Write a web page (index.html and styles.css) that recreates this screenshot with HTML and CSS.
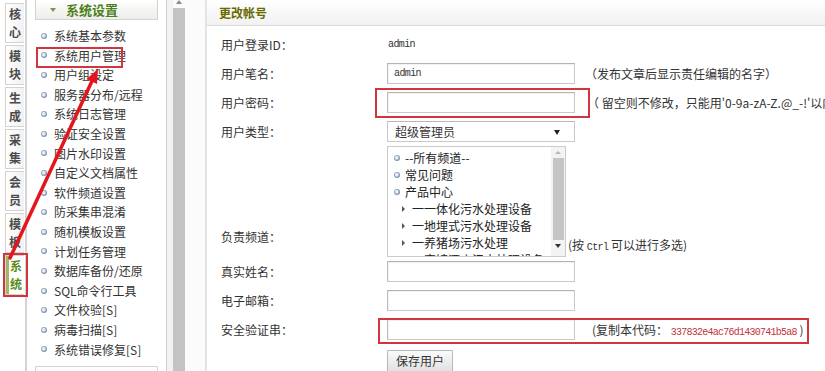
FILE: index.html
```html
<!DOCTYPE html>
<html lang="zh-CN">
<head>
<meta charset="utf-8">
<title>更改帐号</title>
<link rel="stylesheet" href="styles.css">
</head>
<body>
<div class="app">
  <nav class="tabs">
    <div class="tab"><span>核</span><span>心</span></div>
    <div class="tab"><span>模</span><span>块</span></div>
    <div class="tab"><span>生</span><span>成</span></div>
    <div class="tab"><span>采</span><span>集</span></div>
    <div class="tab"><span>会</span><span>员</span></div>
    <div class="tab"><span>模</span><span>板</span></div>
    <div class="tab active"><span>系</span><span>统</span></div>
  </nav>

  <aside class="menu">
    <div class="menu-head"><i class="caret"></i>系统设置</div>
    <ul class="menu-list">
      <li><i class="dot"></i>系统基本参数</li>
      <li><i class="dot"></i>系统用户管理</li>
      <li><i class="dot"></i>用户组设定</li>
      <li><i class="dot"></i>服务器分布/远程</li>
      <li><i class="dot"></i>系统日志管理</li>
      <li><i class="dot"></i>验证安全设置</li>
      <li><i class="dot"></i>图片水印设置</li>
      <li><i class="dot"></i>自定义文档属性</li>
      <li><i class="dot"></i>软件频道设置</li>
      <li><i class="dot"></i>防采集串混淆</li>
      <li><i class="dot"></i>随机模板设置</li>
      <li><i class="dot"></i>计划任务管理</li>
      <li><i class="dot"></i>数据库备份/还原</li>
      <li><i class="dot"></i>SQL命令行工具</li>
      <li><i class="dot"></i>文件校验[S]</li>
      <li><i class="dot"></i>病毒扫描[S]</li>
      <li><i class="dot"></i>系统错误修复[S]</li>
    </ul>
    <div class="menu-head next"></div>
  </aside>

  <div class="frame-scroll">
    <i class="up"></i>
    <div class="thumb"></div>
  </div>

  <main class="panel">
    <div class="panel-head">更改帐号</div>
    <div class="form">
      <div class="label">用户登录ID：</div>
      <div class="field"><span class="mono val">admin</span></div>

      <div class="label">用户笔名：</div>
      <div class="field"><div class="input mono">admin</div><span class="note">（发布文章后显示责任编辑的名字）</span></div>

      <div class="label">用户密码：</div>
      <div class="field"><div class="input"></div><span class="note pwd">（ 留空则不修改，只能用'0-9a-zA-Z.@_-!'以内范围的字符 ）</span></div>

      <div class="label">用户类型：</div>
      <div class="field"><div class="select">超级管理员<i class="tri"></i></div></div>

      <div class="label bottom">负责频道：</div>
      <div class="field list-field">
        <div class="listbox">
          <div class="list-items">
            <div class="opt"><i class="dot"></i>--所有频道--</div>
            <div class="opt"><i class="dot"></i>常见问题</div>
            <div class="opt"><i class="dot"></i>产品中心</div>
            <div class="opt sub"><i class="arr"></i>一一体化污水处理设备</div>
            <div class="opt sub"><i class="arr"></i>一地埋式污水处理设备</div>
            <div class="opt sub"><i class="arr"></i>一养猪场污水处理</div>
            <div class="opt sub"><i class="arr"></i>一宾馆酒店污水处理设备</div>
          </div>
          <div class="list-scroll">
            <i class="s-up"></i>
            <div class="s-thumb"></div>
            <i class="s-down"></i>
          </div>
        </div>
        <span class="ctrl">(按 <span class="mono">Ctrl</span> 可以进行多选)</span>
      </div>

      <div class="label">真实姓名：</div>
      <div class="field"><div class="input"></div></div>

      <div class="label">电子邮箱：</div>
      <div class="field"><div class="input"></div></div>

      <div class="label">安全验证串：</div>
      <div class="field"><div class="input"></div><span class="note code-note">(复制本代码： <span class="mono code">337832e4ac76d1430741b5a8</span> )</span></div>

      <div class="label"></div>
      <div class="field btn-field"><button class="btn" type="button">保存用户</button></div>
    </div>
  </main>
</div>

<div class="mark mark-menu"></div>
<div class="mark mark-tab"></div>
<div class="mark mark-pwd"></div>
<div class="mark mark-code"></div>
<svg class="arrow" width="825" height="371" viewBox="0 0 825 371">
  <line x1="10" y1="258" x2="92" y2="81" stroke="#e3161d" stroke-width="3.5" stroke-linecap="round"/>
  <polygon points="98,69 86.5,79 97,84" fill="#e3161d"/>
</svg>
</body>
</html>
```
FILE: styles.css
```css
html, body {
  margin: 0;
  padding: 0;
  width: 825px;
  height: 371px;
  overflow: hidden;
  background: #fff;
  font-family: "Noto Sans CJK SC", "Noto Sans", sans-serif;
  font-size: 12px;
  color: #333;
}

.app {
  display: flex;
  height: 371px;
}

/* left vertical tabs */
.tabs {
  width: 25px;
  border-right: 2px solid #d4d4d4;
  padding-top: 3px;
  display: flex;
  flex-direction: column;
  gap: 2px;
  flex: none;
}
.tab {
  margin-left: 5px;
  width: 19px;
  height: 40px;
  box-sizing: border-box;
  border: 1px solid #d2d2d2;
  border-right: none;
  background: linear-gradient(90deg, #ffffff, #f1f1f1);
  display: flex;
  flex-direction: column;
  align-items: center;
  justify-content: center;
  font-size: 12px;
  font-weight: bold;
  color: #4b4b4b;
}
.tab span {
  display: block;
  height: 18px;
  line-height: 18px;
}
.tab.active {
  background: #fff;
  box-shadow: inset 3px 0 0 #9dbb62;
  color: #5a8a1c;
  padding-left: 2px;
}

/* menu */
.menu {
  width: 131px;
  padding-left: 8px;
  border-right: 1px solid #cfcfcf;
  flex: none;
}
.menu-head {
  margin-top: -1px;
  width: 123px;
  height: 21px;
  box-sizing: border-box;
  border: 1px solid #d3d3d3;
  background: linear-gradient(#ffffff, #eceee8);
  display: flex;
  align-items: center;
  padding-left: 14px;
  font-size: 13px;
  font-weight: bold;
  color: #4f7f1d;
}
.caret {
  width: 0;
  height: 0;
  border-left: 3px solid transparent;
  border-right: 3px solid transparent;
  border-top: 4px solid #7d9160;
  margin-right: 10px;
}
.menu-head.next {
  margin-top: 7px;
}
.menu-list {
  list-style: none;
  margin: 0;
  padding: 6px 0 0 0;
}
.menu-list li {
  height: 19.6px;
  line-height: 19.6px;
  display: flex;
  align-items: center;
  white-space: nowrap;
  color: #333;
}
.dot {
  width: 6px;
  height: 6px;
  border-radius: 50%;
  background: radial-gradient(circle at 45% 45%, #e8edf4 0 25%, #8699b6 55%, #6d82a3 100%);
  flex: none;
}
.menu-list .dot {
  margin-left: 6px;
  margin-right: 7px;
}

/* frame scrollbar */
.frame-scroll {
  width: 38px;
  flex: none;
  background: linear-gradient(90deg, #f2f2f2 0 6px, #fbfbfb 6px);
  border-right: 1px solid #e2e2e2;
}
.frame-scroll .up {
  display: block;
  width: 0;
  height: 0;
  margin-left: 9px;
  border-left: 3px solid transparent;
  border-right: 3px solid transparent;
  border-bottom: 4px solid #8a8a8a;
}
.frame-scroll .thumb {
  margin: 4px 0 0 6px;
  width: 12px;
  height: 370px;
  background: #c3c3c3;
}

/* main panel */
.panel {
  flex: 1;
  border-left: 1px solid #e6e6e6;
  min-width: 0;
}
.panel-head {
  height: 25px;
  line-height: 25px;
  padding-left: 12px;
  border-bottom: 1px solid #dadada;
  background: linear-gradient(#ffffff, #f1f1f1);
  color: #6a6a00;
  font-weight: bold;
}
.form {
  padding-top: 4px;
  display: grid;
  grid-template-columns: 180px 1fr;
  grid-template-rows: 29px 29px 29px 29px 111px 29px 29px 29px 29px;
}
.label {
  padding-left: 14px;
  display: flex;
  align-items: center;
  white-space: nowrap;
}
.label.bottom {
  align-items: flex-end;
  padding-bottom: 12px;
}
.field {
  display: flex;
  align-items: center;
  white-space: nowrap;
  min-width: 0;
}
.mono {
  font-family: "Liberation Mono", "DejaVu Sans Mono", monospace;
  font-size: 10px;
  letter-spacing: -0.6px;
}
.val {
  padding-left: 1px;
}
.input {
  width: 188px;
  height: 21px;
  box-sizing: border-box;
  border: 1px solid #c9c9c9;
  border-top-color: #b3b3b3;
  border-left-color: #bdbdbd;
  box-shadow: inset 1px 1px 1px rgba(0, 0, 0, 0.06);
  background: #fff;
  padding-left: 6px;
  line-height: 19px;
  flex: none;
}
.note {
  margin-left: 10px;
  color: #333;
}
.note.pwd {
  margin-left: 12px;
}
.note.code-note {
  margin-left: 17px;
}
.code {
  color: #c2343a;
  letter-spacing: -0.75px;
}
.select {
  width: 188px;
  height: 21px;
  box-sizing: border-box;
  border: 1px solid #c9c9c9;
  border-top-color: #b8b8b8;
  background: #fff;
  padding-left: 7px;
  display: flex;
  align-items: center;
  position: relative;
}
.tri {
  position: absolute;
  right: 14px;
  top: 8px;
  width: 0;
  height: 0;
  border-left: 3px solid transparent;
  border-right: 3px solid transparent;
  border-top: 5px solid #222;
}

/* listbox */
.list-field {
  align-items: flex-end;
}
.listbox {
  width: 179px;
  height: 111px;
  box-sizing: border-box;
  border: 1px solid #cbcbcb;
  display: flex;
  overflow: hidden;
  flex: none;
}
.list-items {
  flex: 1;
  padding-top: 2px;
  overflow: hidden;
}
.opt {
  height: 17px;
  line-height: 17px;
  display: flex;
  align-items: center;
  white-space: nowrap;
  color: #222;
}
.opt .dot {
  margin-left: 6px;
  margin-right: 5px;
}
.opt.sub {
  padding-left: 14px;
}
.arr {
  width: 0;
  height: 0;
  border-top: 3px solid transparent;
  border-bottom: 3px solid transparent;
  border-left: 3px solid #555;
  margin-right: 7px;
}
.list-scroll {
  width: 14px;
  background: #f3f3f3;
  display: flex;
  flex-direction: column;
  align-items: center;
  padding-top: 4px;
  box-sizing: border-box;
}
.s-up {
  width: 0;
  height: 0;
  border-left: 3px solid transparent;
  border-right: 3px solid transparent;
  border-bottom: 3px solid #b5b5b5;
}
.s-thumb {
  margin-top: 4px;
  width: 11px;
  height: 82px;
  background: #c5c5c5;
}
.s-down {
  margin-top: 4px;
  width: 0;
  height: 0;
  border-left: 3px solid transparent;
  border-right: 3px solid transparent;
  border-top: 4px solid #333;
}
.ctrl {
  margin-left: 2px;
  margin-bottom: 2px;
  line-height: 14px;
}
.btn-field {
  align-items: flex-start;
}
.btn {
  margin-top: 6px;
  height: 22px;
  padding: 0 8px;
  border: 1px solid #b8b8b8;
  border-radius: 1px;
  background: linear-gradient(#fbfbfb, #e1e1e1);
  font-family: "Noto Sans CJK SC", sans-serif;
  font-size: 12px;
  color: #333;
  line-height: 20px;
}

/* annotations */
.mark {
  position: absolute;
  border: 2px solid #d0363d;
  box-sizing: border-box;
  pointer-events: none;
}
.mark-menu { left: 36px; top: 47px; width: 87px; height: 21px; }
.mark-tab { left: 3px; top: 253px; width: 25px; height: 44px; }
.mark-pwd { left: 375px; top: 88px; width: 215px; height: 30px; }
.mark-code { left: 378px; top: 318px; width: 431px; height: 26px; }
.arrow {
  position: absolute;
  left: 0;
  top: 0;
  pointer-events: none;
}
```
